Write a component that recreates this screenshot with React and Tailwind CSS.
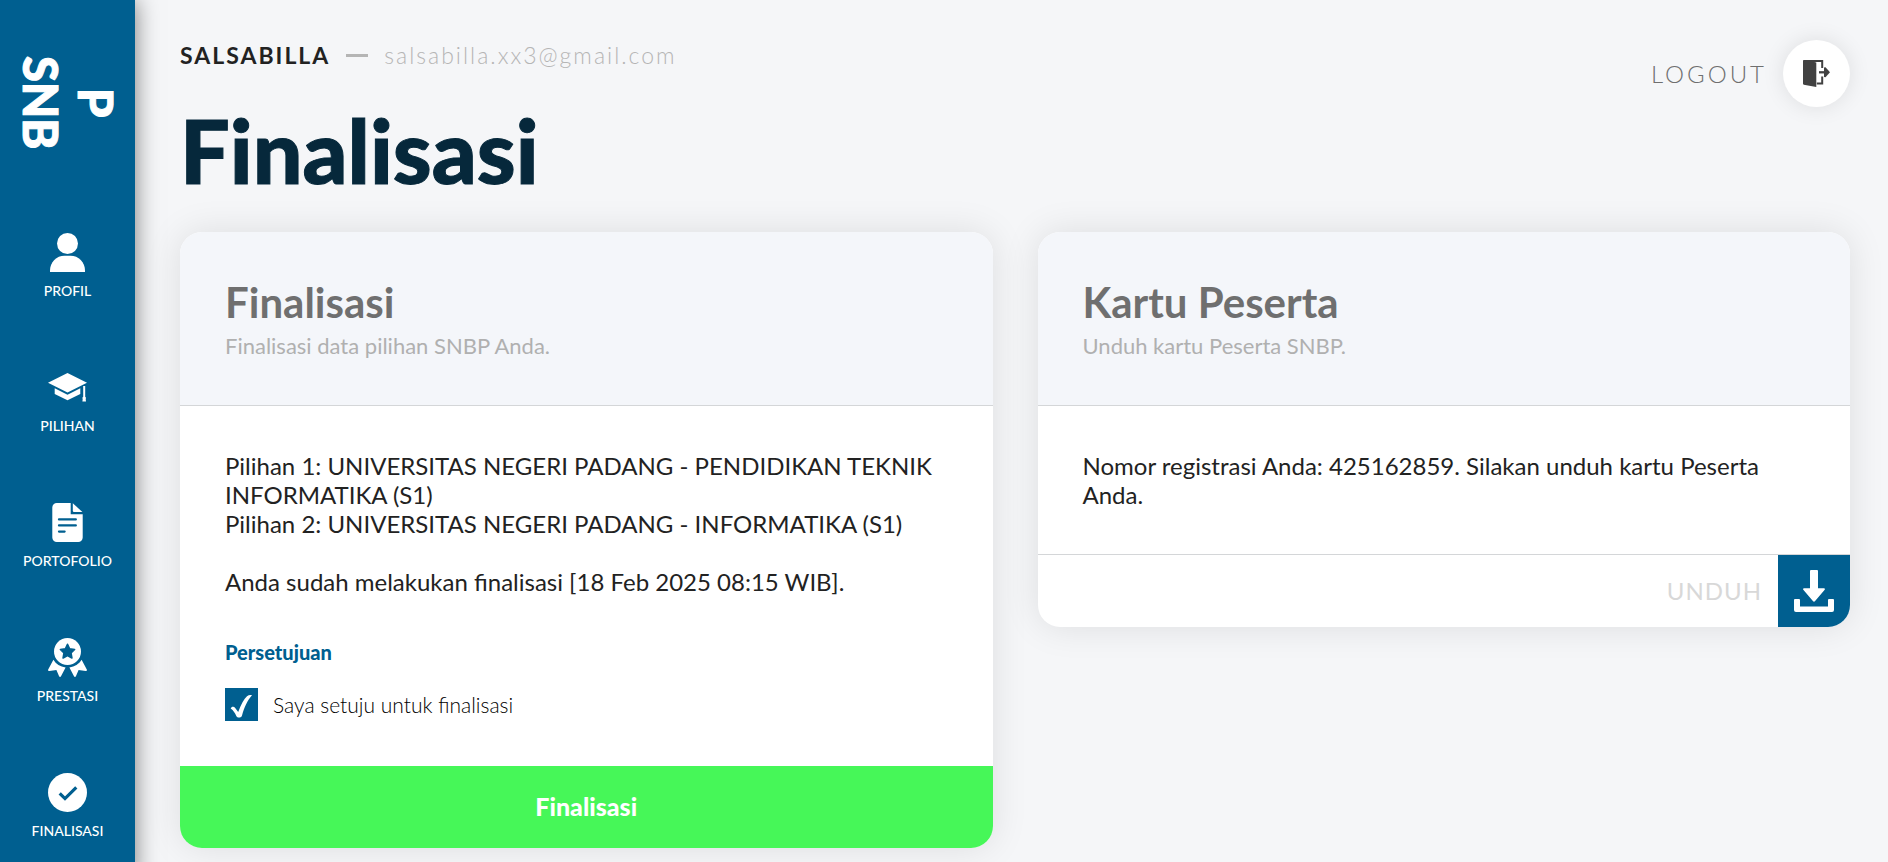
import React from "react";

function ProfileIcon() {
  return (
    <svg viewBox="0 0 39 39" className="size-[39px]" fill="currentColor" aria-hidden="true">
      <circle cx="19.5" cy="10.5" r="10.5" />
      <path d="M2 39v-1.5C2 29 8.500 22.700 16.500 22.700h6C30.500 22.700 37 29 37 37.500V39z" />
    </svg>
  );
}

function CapIcon() {
  return (
    <svg viewBox="0 0 39 39" className="size-[39px]" fill="currentColor" aria-hidden="true">
      <path d="M0 14.700 19.500 5 39 14.700 19.500 24.500z" />
      <path d="M6.700 20.300 19.500 26.700l12.800-6.400v5.600L19.500 32.300 6.700 25.900z" />
      <path d="M35.200 18h2v10.700c.9.5.9 1.600.5 2.400l.3 2.500h-3.600l.3-2.500c-.4-.8-.4-1.900.5-2.400z" />
    </svg>
  );
}

function DocumentIcon() {
  return (
    <svg viewBox="0 0 39 39" className="size-[39px]" fill="currentColor" aria-hidden="true">
      <path d="M8.800 0h9.400v8.300a3 3 0 0 0 3 3h13.500V34.500a4.500 4.500 0 0 1-4.500 4.500H8.800a4.500 4.500 0 0 1-4.500-4.500v-30A4.500 4.500 0 0 1 8.800 0z" />
      <path d="M18 0h4.700v12H18z" />
      <path d="M24.800.2 34.400 9h-8.400a1.200 1.200 0 0 1-1.200-1.200z" />
      <path d="M11 16.400h16.800M11 22.400h16.800M11 28.600h5.600" stroke="#005f90" strokeWidth="2.300" strokeLinecap="round" />
    </svg>
  );
}

function AwardIcon() {
  return (
    <svg viewBox="0 0 39 39" className="size-[39px]" fill="currentColor" aria-hidden="true">
      <circle cx="19.5" cy="13.500" r="13.500" />
      <path
        d="M19.500 6.300l2.100 4.500 5 .7-3.600 3.500.9 5-4.400-2.400-4.400 2.400.9-5-3.600-3.500 5-.7z"
        fill="#005f90"
        stroke="#005f90"
        strokeWidth="1.600"
        strokeLinejoin="round"
      />
      <path d="M5.400 21.800c2.600 4.200 6.800 7 12.200 7.700L13 38.300c-.4.900-1.500.9-1.900 0l-2.700-6.200-7 .9c-1 .1-1.600-.7-1.200-1.600z" />
      <path d="M33.600 21.800c-2.600 4.200-6.800 7-12.200 7.700L26 38.300c.4.900 1.500.9 1.900 0l2.700-6.200 7 .9c1 .1 1.600-.7 1.200-1.600z" />
    </svg>
  );
}

function CheckCircleIcon() {
  return (
    <svg viewBox="0 0 39 39" className="size-[39px]" aria-hidden="true">
      <circle cx="19.5" cy="19.5" r="19.500" fill="currentColor" />
      <path d="M11.700 20.300l5.300 5.300L28.300 14.300" fill="none" stroke="#005f90" strokeWidth="3.200" />
    </svg>
  );
}

function LogoutIcon() {
  return (
    <svg viewBox="0 0 27 27" className="size-[27px]" aria-hidden="true">
      <path d="M.8 0h2.500L13.300 2.500V27L.8 24.800A1 1 0 0 1 0 23.800V.8A.8.800 0 0 1 .8 0z" fill="#414141" />
      <path d="M2 1h17.200v7M19.200 16.500v7h-5.400" fill="none" stroke="#414141" strokeWidth="2" />
      <path d="M16 12.300h8" fill="none" stroke="#414141" strokeWidth="2.300" />
      <path d="M21 7.500 22.500 7.300 27 12.300 22.500 17.300 21 17z" fill="#414141" />
    </svg>
  );
}

function DownloadIcon() {
  return (
    <svg viewBox="0 0 40 42" className="h-[42px] w-[40px]" fill="currentColor" aria-hidden="true">
      <path d="M17 0h6a1 1 0 0 1 1 1v17.300h6c.9 0 1.200.9.700 1.500L20.900 31.300c-.5.600-1.300.6-1.800 0L9.300 19.800c-.5-.6-.2-1.500.7-1.500h6V1a1 1 0 0 1 1-1z" />
      <path d="M1 29h4a1 1 0 0 1 1 1v6.500h28V30a1 1 0 0 1 1-1h4a1 1 0 0 1 1 1v10a2 2 0 0 1-2 2H2a2 2 0 0 1-2-2V30a1 1 0 0 1 1-1z" />
    </svg>
  );
}

const menu = [
  { label: "PROFIL", icon: ProfileIcon },
  { label: "PILIHAN", icon: CapIcon },
  { label: "PORTOFOLIO", icon: DocumentIcon },
  { label: "PRESTASI", icon: AwardIcon },
  { label: "FINALISASI", icon: CheckCircleIcon },
];

function Sidebar() {
  return (
    <aside className="z-10 w-[135px] shrink-0 bg-[#005f90] text-white shadow-[0_0_22px_rgba(0,0,0,0.5)]">
      <div className="flex h-[205px] items-center justify-center">
        <div className="text-center text-[47px] leading-[55px] font-black [-webkit-text-stroke:1px_currentColor] [writing-mode:vertical-rl]">
          P<br />SNB
        </div>
      </div>
      <nav>
        {menu.map(({ label, icon: Icon }) => (
          <a key={label} href="#" className="flex h-[135px] flex-col items-center gap-[10px] pt-7 text-[14px] leading-[18px] font-medium">
            <Icon />
            {label}
          </a>
        ))}
      </nav>
    </aside>
  );
}

function Card({ title, subtitle, children }) {
  return (
    <section className="overflow-hidden rounded-[22px] bg-white shadow-[0_0_36px_rgba(0,0,0,0.1)]">
      <header className="border-b border-[#d4d6d8] bg-[#f4f6fa] px-[45px] pt-[45px] pb-11">
        <h2 className="text-[42px] leading-[50px] font-bold text-[#6f6f6f]">{title}</h2>
        <p className="mt-1 text-[22px] leading-[30px] text-[#b0b0b0]">{subtitle}</p>
      </header>
      {children}
    </section>
  );
}

export default function App() {
  return (
    <div className="flex min-h-screen bg-[#f5f6f8] font-['Lato',sans-serif] text-[#222222]">
      <Sidebar />
      <main className="min-w-0 flex-1 px-[45px] pt-10 pr-[38px]">
        <div className="flex items-start justify-between">
          <div>
            <div className="flex items-center text-[23px] leading-[30px]">
              <span className="font-bold tracking-[2px]">SALSABILLA</span>
              <span className="mx-4 h-[3px] w-[22px] bg-[#b5b5b5]" />
              <span className="font-light tracking-[2px] text-[#b5b5b5]">salsabilla.xx3@gmail.com</span>
            </div>
            <h1 className="mt-7 text-[88px] leading-[104px] font-black text-[#06283b] [-webkit-text-stroke:1px_currentColor]">
              Finalisasi
            </h1>
          </div>
          <button type="button" className="flex items-center gap-4 text-[24px] font-light tracking-[3px] text-[#6f6f6f]">
            LOGOUT
            <span className="flex size-[67px] items-center justify-center rounded-full bg-white shadow-[0_0_22px_rgba(0,0,0,0.1)]">
              <LogoutIcon />
            </span>
          </button>
        </div>

        <div className="mt-[30px] grid grid-cols-2 items-start gap-[45px]">
          <Card title="Finalisasi" subtitle="Finalisasi data pilihan SNBP Anda.">
            <div className="p-[45px] text-[24px] leading-[29px]">
              <p>Pilihan 1: UNIVERSITAS NEGERI PADANG - PENDIDIKAN TEKNIK INFORMATIKA (S1)</p>
              <p>Pilihan 2: UNIVERSITAS NEGERI PADANG - INFORMATIKA (S1)</p>
              <p className="mt-[29px]">Anda sudah melakukan finalisasi [18 Feb 2025 08:15 WIB].</p>
              <fieldset className="mt-11">
                <legend className="text-[20px] leading-6 font-black text-[#005f90]">Persetujuan</legend>
                <label className="mt-6 flex items-center gap-[15px] text-[21px] font-light text-black">
                  <span className="relative flex size-[33px]">
                    <input type="checkbox" defaultChecked className="size-[33px] appearance-none bg-[#005f90]" />
                    <svg viewBox="0 0 33 33" className="pointer-events-none absolute inset-0" fill="#ffffff" aria-hidden="true">
                      <path d="M5.700 20.500C6.500 18.500 9 18.300 10.200 20L13.200 24C16 16.500 19 11 22 8.300 23.500 7 25.500 6.600 27 7.300 22.500 12.500 19.500 18.500 17 27.500 16.500 30 12.500 30.400 11.300 28 10 25 8.500 22.500 5.700 20.500z" />
                    </svg>
                  </span>
                  Saya setuju untuk finalisasi
                </label>
              </fieldset>
            </div>
            <button type="button" className="h-[82px] w-full bg-[#46f758] text-[25px] font-black text-white">
              Finalisasi
            </button>
          </Card>

          <Card title="Kartu Peserta" subtitle="Unduh kartu Peserta SNBP.">
            <p className="p-[45px] text-[24px] leading-[29px]">
              Nomor registrasi Anda: 425162859. Silakan unduh kartu Peserta Anda.
            </p>
            <div className="border-t border-[#d4d6d8]">
              <button type="button" className="ml-auto flex items-center gap-4 text-[24px] tracking-[1px] text-[#d8d8d8]">
                UNDUH
                <span className="flex size-[72px] items-center justify-center bg-[#005f90] text-white">
                  <DownloadIcon />
                </span>
              </button>
            </div>
          </Card>
        </div>
      </main>
    </div>
  );
}
